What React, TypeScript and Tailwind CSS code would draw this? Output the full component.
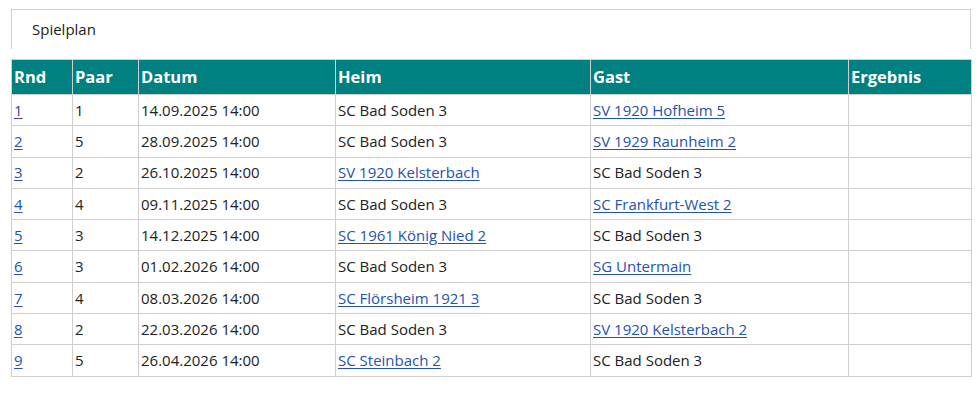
import React from "react";

type Row = { rnd: string; paar: string; datum: string; heim: string; heimLink: boolean; gast: string; gastLink: boolean };

const rows: Row[] = [
  { rnd: "1", paar: "1", datum: "14.09.2025 14:00", heim: "SC Bad Soden 3", heimLink: false, gast: "SV 1920 Hofheim 5", gastLink: true },
  { rnd: "2", paar: "5", datum: "28.09.2025 14:00", heim: "SC Bad Soden 3", heimLink: false, gast: "SV 1929 Raunheim 2", gastLink: true },
  { rnd: "3", paar: "2", datum: "26.10.2025 14:00", heim: "SV 1920 Kelsterbach", heimLink: true, gast: "SC Bad Soden 3", gastLink: false },
  { rnd: "4", paar: "4", datum: "09.11.2025 14:00", heim: "SC Bad Soden 3", heimLink: false, gast: "SC Frankfurt-West 2", gastLink: true },
  { rnd: "5", paar: "3", datum: "14.12.2025 14:00", heim: "SC 1961 König Nied 2", heimLink: true, gast: "SC Bad Soden 3", gastLink: false },
  { rnd: "6", paar: "3", datum: "01.02.2026 14:00", heim: "SC Bad Soden 3", heimLink: false, gast: "SG Untermain", gastLink: true },
  { rnd: "7", paar: "4", datum: "08.03.2026 14:00", heim: "SC Flörsheim 1921 3", heimLink: true, gast: "SC Bad Soden 3", gastLink: false },
  { rnd: "8", paar: "2", datum: "22.03.2026 14:00", heim: "SC Bad Soden 3", heimLink: false, gast: "SV 1920 Kelsterbach 2", gastLink: true },
  { rnd: "9", paar: "5", datum: "26.04.2026 14:00", heim: "SC Steinbach 2", heimLink: true, gast: "SC Bad Soden 3", gastLink: false },
];

const linkCls = "text-[#2452b0] underline underline-offset-2";

export default function App() {
  return (
    <div className="w-[980px] h-[396px] bg-white text-[15px] text-[#222] pl-[11px] pt-[9px]" style={{ fontFamily: '"Open Sans", "Noto Sans", sans-serif' }}>
      <div className="w-[960px] h-[40px] border-t border-l border-r border-[#cfcfcf] flex items-center pl-[20px]">
        <span className="text-[15px] text-[#222]">Spielplan</span>
      </div>
      <table className="mt-[10px] w-[960px] border-collapse table-fixed">
        <colgroup>
          <col className="w-[61px]" />
          <col className="w-[66px]" />
          <col className="w-[197px]" />
          <col className="w-[255px]" />
          <col className="w-[258px]" />
          <col className="w-[123px]" />
        </colgroup>
        <thead>
          <tr className="h-[35px] bg-[#008080] text-white text-[16.5px] font-bold text-left">
            {["Rnd", "Paar", "Datum", "Heim", "Gast", "Ergebnis"].map((h) => (
              <th key={h} className="border border-[#cfcfcf] px-[2px] font-bold">{h}</th>
            ))}
          </tr>
        </thead>
        <tbody>
          {rows.map((r) => (
            <tr key={r.rnd} className="h-[31.3px]">
              <td className="border border-[#cfcfcf] px-[2px]">
                <a href="#" className={r.rnd === "1" ? "text-[#4b3a9c] underline underline-offset-2" : linkCls}>{r.rnd}</a>
              </td>
              <td className="border border-[#cfcfcf] px-[2px]">{r.paar}</td>
              <td className="border border-[#cfcfcf] px-[2px]">{r.datum}</td>
              <td className="border border-[#cfcfcf] px-[2px]">
                {r.heimLink ? <a href="#" className={linkCls}>{r.heim}</a> : r.heim}
              </td>
              <td className="border border-[#cfcfcf] px-[2px]">
                {r.gastLink ? <a href="#" className={linkCls}>{r.gast}</a> : r.gast}
              </td>
              <td className="border border-[#cfcfcf] px-[2px]"></td>
            </tr>
          ))}
        </tbody>
      </table>
    </div>
  );
}
